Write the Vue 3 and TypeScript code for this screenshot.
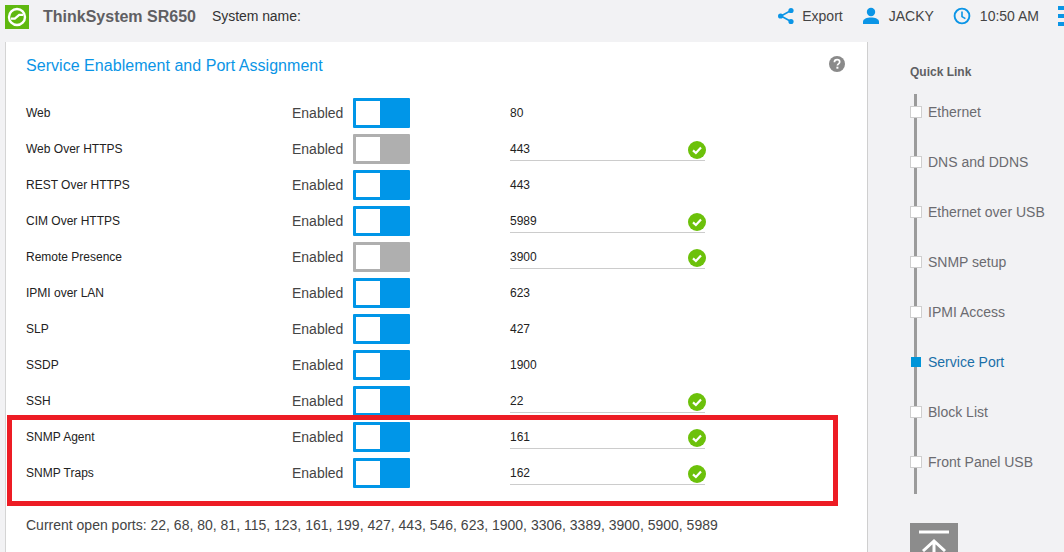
<script setup lang="ts">
interface Row { name: string; on: boolean; port: string; edit: boolean }
const rows: Row[] = [
  { name: 'Web', on: true, port: '80', edit: false },
  { name: 'Web Over HTTPS', on: false, port: '443', edit: true },
  { name: 'REST Over HTTPS', on: true, port: '443', edit: false },
  { name: 'CIM Over HTTPS', on: true, port: '5989', edit: true },
  { name: 'Remote Presence', on: false, port: '3900', edit: true },
  { name: 'IPMI over LAN', on: true, port: '623', edit: false },
  { name: 'SLP', on: true, port: '427', edit: false },
  { name: 'SSDP', on: true, port: '1900', edit: false },
  { name: 'SSH', on: true, port: '22', edit: true },
  { name: 'SNMP Agent', on: true, port: '161', edit: true },
  { name: 'SNMP Traps', on: true, port: '162', edit: true },
]
const links = ['Ethernet', 'DNS and DDNS', 'Ethernet over USB', 'SNMP setup', 'IPMI Access', 'Service Port', 'Block List', 'Front Panel USB']
</script>

<template>
  <div class="page">
    <header class="top">
      <div class="logo">
        <svg width="24" height="24" viewBox="0 0 24 24">
          <circle cx="12" cy="12" r="8" fill="none" stroke="#fff" stroke-width="2.4" />
          <path d="M6 13.6h3.8l4.4-3.8H18" fill="none" stroke="#fff" stroke-width="2.2" />
        </svg>
      </div>
      <span class="product">ThinkSystem SR650</span>
      <span class="sysname">System name:</span>
      <div class="tools">
        <svg class="ico" width="18" height="18" viewBox="0 0 18 18">
          <path d="M14 3.5 4 9l10 5.5" fill="none" stroke="#0b95e6" stroke-width="1.6" />
          <circle cx="14" cy="3.5" r="2.6" fill="#0b95e6" />
          <circle cx="3.6" cy="9" r="2.6" fill="#0b95e6" />
          <circle cx="14" cy="14.5" r="2.6" fill="#0b95e6" />
        </svg>
        <span class="t export">Export</span>
        <svg class="ico" width="18" height="18" viewBox="0 0 18 18">
          <circle cx="9" cy="5" r="4.2" fill="#0b95e6" />
          <path d="M1 17v-2.4C1 11.8 5 10.4 9 10.4s8 1.4 8 4.2V17z" fill="#0b95e6" />
        </svg>
        <span class="t jacky">JACKY</span>
        <svg class="ico" width="18" height="18" viewBox="0 0 18 18">
          <circle cx="9" cy="9" r="7.4" fill="none" stroke="#0b95e6" stroke-width="1.9" />
          <path d="M9 4.6V9.6l3.4 2" fill="none" stroke="#0b95e6" stroke-width="1.6" />
        </svg>
        <span class="t time">10:50 AM</span>
        <div class="menu"><i></i><i></i><i></i></div>
      </div>
    </header>
    <div class="body">
      <main class="panel">
        <div class="head">
          <h1>Service Enablement and Port Assignment</h1>
          <svg width="16" height="16" viewBox="0 0 16 16" class="help">
            <circle cx="8" cy="8" r="8" fill="#8a8a8a" />
            <path d="M5.4 6.2C5.4 4.6 6.6 3.7 8.1 3.7s2.6.9 2.6 2.2c0 1.9-2.3 1.9-2.3 3.6" fill="none" stroke="#fff" stroke-width="1.7" />
            <rect x="7.4" y="10.7" width="2" height="2" fill="#fff" />
          </svg>
        </div>
        <div class="rows">
          <div v-for="r in rows" :key="r.name" class="row">
            <span class="name">{{ r.name }}</span>
            <span class="en">Enabled</span>
            <span class="toggle" :class="{ off: !r.on }"><b></b></span>
            <span class="port" :class="{ edit: r.edit }">
              {{ r.port }}
              <svg v-if="r.edit" class="check" width="18" height="18" viewBox="0 0 18 18">
                <circle cx="9" cy="9" r="9" fill="#6cc10a" />
                <path d="M5 9.4l2.9 2.6L13 6.6" fill="none" stroke="#fff" stroke-width="2.2" />
              </svg>
            </span>
          </div>
        </div>
        <p class="open">Current open ports: 22, 68, 80, 81, 115, 123, 161, 199, 427, 443, 546, 623, 1900, 3306, 3389, 3900, 5900, 5989</p>
        <div class="mark"></div>
      </main>
      <aside class="side">
        <h2>Quick Link</h2>
        <ul class="links">
          <li v-for="l in links" :key="l" :class="{ active: l === 'Service Port' }">
            <i class="node"></i><span>{{ l }}</span>
          </li>
        </ul>
        <div class="totop">
          <svg width="48" height="48" viewBox="0 0 48 48">
            <path d="M9 9h30" stroke="#fff" stroke-width="3" />
            <path d="M13 28 24 18l11 10M24 18v22" fill="none" stroke="#fff" stroke-width="3" />
          </svg>
        </div>
      </aside>
    </div>
  </div>
</template>

<style>
html, body { margin: 0; overflow: hidden; }
</style>

<style scoped>
.page {
  width: 1064px;
  height: 552px;
  overflow: hidden;
  background: #f2f2f4;
  font-family: "Liberation Sans", Arial, sans-serif;
  display: flex;
  flex-direction: column;
}
.top {
  height: 42px;
  flex: none;
  display: flex;
  align-items: center;
  padding-left: 5px;
  padding-bottom: 8px;
  box-sizing: border-box;
}
.logo { width: 24px; height: 24px; background: #5fb80f; }
.product {
  margin-left: 14px;
  font-size: 16px;
  font-weight: 700;
  color: #5f5f63;
  width: 169px;
  white-space: nowrap;
}
.sysname { font-size: 14px; letter-spacing: -0.06px; color: #333; margin-top: -3px; }
.tools {
  margin-left: auto;
  display: flex;
  align-items: center;
  margin-top: -2px;
}
.ico { display: block; flex: none; }
.t { font-size: 14px; color: #444; white-space: nowrap; }
.export { margin: 0 19px 0 7px; }
.jacky { margin: 0 19px 0 9px; }
.time { margin: 0 19px 0 9px; }
.menu {
  display: flex;
  flex-direction: column;
  gap: 4px;
  width: 6px;
}
.menu i { display: block; width: 6px; height: 4px; background: #0b95e6; }
.body { flex: 1; display: flex; min-height: 0; }
.panel {
  position: relative;
  margin-left: 5px;
  width: 863px;
  flex: none;
  box-sizing: border-box;
  background: #fff;
  border-left: 1px solid #d4d4d4;
  border-right: 1px solid #cfcfcf;
  padding: 0 0 0 20px;
}
.head {
  height: 53px;
  display: flex;
  align-items: center;
  padding-bottom: 5px;
  box-sizing: border-box;
  position: relative;
}
h1 {
  margin: 0;
  font-size: 16px;
  font-weight: 400;
  color: #0b95e6;
  letter-spacing: 0.04px;
}
.help { position: absolute; left: 803px; top: 14px; }
.rows { display: flex; flex-direction: column; }
.row {
  height: 36px;
  display: flex;
  align-items: center;
  font-size: 12px;
  color: #222;
}
.name { width: 266px; margin-top: -1px; }
.en { width: 61px; font-size: 14px; color: #444; }
.toggle {
  width: 57px;
  height: 30px;
  background: #0096e8;
  box-sizing: border-box;
  padding: 3px;
  border-radius: 1px;
}
.toggle.off { background: #afafaf; }
.toggle b { display: block; width: 24px; height: 24px; background: #fff; }
.port {
  position: relative;
  margin-left: 100px;
  width: 195px;
  height: 30px;
  box-sizing: border-box;
  line-height: 31px;
}
.port.edit { height: 27px; margin-bottom: 3px; border-bottom: 1px solid #cccccc; }
.check { position: absolute; right: -1px; top: 7px; }
.open {
  margin: 26px 0 0;
  font-size: 14px;
  color: #444;
  white-space: nowrap;
}
.mark {
  position: absolute;
  left: 1px;
  top: 373px;
  width: 831px;
  height: 91px;
  box-sizing: border-box;
  border: 5px solid #ed1c24;
}
.side { position: relative; flex: 1; padding-left: 42px; }
h2 {
  margin: 23px 0 0;
  font-size: 12px;
  line-height: 14px;
  font-weight: 700;
  color: #5f5f63;
}
.links {
  list-style: none;
  margin: 15px 0 0;
  padding: 0;
  position: relative;
  height: 400px;
}
.links::before {
  content: "";
  position: absolute;
  left: 4px;
  top: 0;
  width: 3px;
  height: 400px;
  background: #9b9b9b;
}
.links li {
  height: 50px;
  display: flex;
  align-items: flex-start;
  font-size: 14px;
  line-height: 16px;
  color: #6b6b70;
  position: relative;
}
.links li span { margin-top: 10px; margin-left: 6px; }
.node {
  display: block;
  margin-top: 12px;
  width: 12px;
  height: 12px;
  box-sizing: border-box;
  background: #fff;
  border: 1px solid #cfcfcf;
}
.active { color: #1a6fa8 !important; }
.active .node { background: #0095d9; border-color: #0095d9; width: 10px; height: 10px; margin: 13px 1px 0; }
.totop {
  width: 48px;
  height: 48px;
  background: #8c8c8c;
  margin-top: 29px;
}
</style>
